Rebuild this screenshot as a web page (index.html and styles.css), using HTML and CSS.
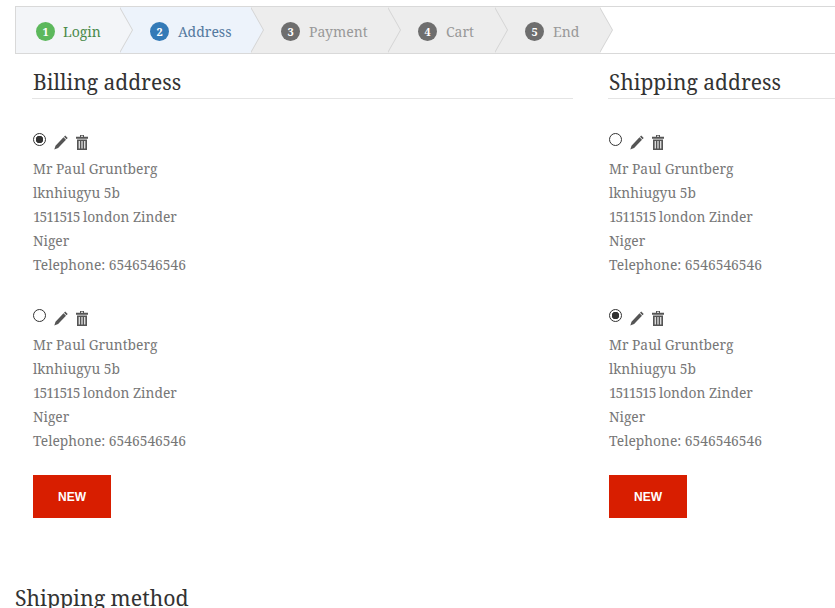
FILE: index.html
```html
<!DOCTYPE html>
<html lang="en">
<head>
<meta charset="utf-8">
<title>Checkout</title>
<link rel="stylesheet" href="styles.css">
</head>
<body>
<svg class="defs" width="0" height="0" aria-hidden="true">
  <symbol id="pencil" viewBox="0 0 14 15"><path d="M11.200 0.500l2.500 2.500-1.200 1.200-2.500-2.500zM9.500 2.200l2.500 2.500-7.900 8.400-3.800 1.500 1.200-3.900z"/></symbol>
  <symbol id="trash" viewBox="0 0 12 15"><path d="M4 0h4v1.700h4v2h-12v-2h4zM5 0.800v0.900h2v-0.900zM1 4.500h10v10.500h-10zM2.700 6v7.500h1.100v-7.500zM5.450 6v7.500h1.100v-7.500zM8.200 6v7.500h1.100v-7.500z" fill-rule="evenodd"/></symbol>
</svg>
<nav class="steps">
  <div class="step done"><span class="num">1</span>Login</div>
  <div class="step current"><span class="num">2</span>Address</div>
  <div class="step"><span class="num">3</span>Payment</div>
  <div class="step"><span class="num">4</span>Cart</div>
  <div class="step"><span class="num">5</span>End</div>
</nav>
<main class="addresses">
  <section class="column">
    <h2 class="column-title">Billing address</h2>
    <div class="card">
      <div class="controls"><input class="radio" type="radio" name="billing" checked><svg class="icon pencil"><use href="#pencil"/></svg><svg class="icon trash"><use href="#trash"/></svg></div>
      <p class="lines">Mr Paul Gruntberg<br>lknhiugyu 5b<br><span class="zip">1511515</span> london Zinder<br>Niger<br>Telephone: 6546546546</p>
    </div>
    <div class="card">
      <div class="controls"><input class="radio" type="radio" name="billing"><svg class="icon pencil"><use href="#pencil"/></svg><svg class="icon trash"><use href="#trash"/></svg></div>
      <p class="lines">Mr Paul Gruntberg<br>lknhiugyu 5b<br><span class="zip">1511515</span> london Zinder<br>Niger<br>Telephone: 6546546546</p>
    </div>
    <button class="new-btn" type="button">NEW</button>
  </section>
  <section class="column">
    <h2 class="column-title">Shipping address</h2>
    <div class="card">
      <div class="controls"><input class="radio" type="radio" name="shipping"><svg class="icon pencil"><use href="#pencil"/></svg><svg class="icon trash"><use href="#trash"/></svg></div>
      <p class="lines">Mr Paul Gruntberg<br>lknhiugyu 5b<br><span class="zip">1511515</span> london Zinder<br>Niger<br>Telephone: 6546546546</p>
    </div>
    <div class="card">
      <div class="controls"><input class="radio" type="radio" name="shipping" checked><svg class="icon pencil"><use href="#pencil"/></svg><svg class="icon trash"><use href="#trash"/></svg></div>
      <p class="lines">Mr Paul Gruntberg<br>lknhiugyu 5b<br><span class="zip">1511515</span> london Zinder<br>Niger<br>Telephone: 6546546546</p>
    </div>
    <button class="new-btn" type="button">NEW</button>
  </section>
</main>
<h2 class="method-title">Shipping method</h2>
</body>
</html>
```
FILE: styles.css
```css
html, body { margin: 0; padding: 0; height: 608px; overflow: hidden; background: #fff; }
body { font-family: "Noto Serif", "DejaVu Serif Condensed", "DejaVu Serif", serif; color: #777; padding-top: 6px; box-sizing: border-box; }
.defs { position: absolute; }

.steps { display: flex; margin-left: 15px; height: 46px; border: 1px solid #d9d9d9; border-right: 0; }
.step { position: relative; display: flex; align-items: center; box-sizing: border-box; height: 46px; background: #ededed; color: #999; font-size: 14px; padding: 2px 0 0 30px; }
.step:nth-child(1) { width: 104px; padding-left: 20px; z-index: 5; }
.step:nth-child(2) { width: 131px; z-index: 4; }
.step:nth-child(3) { width: 137px; z-index: 3; }
.step:nth-child(4) { width: 107px; z-index: 2; }
.step:nth-child(5) { width: 105px; z-index: 1; }
.step::before, .step::after { content: ""; position: absolute; top: 0; height: 46px; width: 13px; clip-path: polygon(0 0, 100% 50%, 0 100%); }
.step::before { left: 100%; background: #d4d4d4; }
.step::after { left: calc(100% - 1px); background: #ededed; }
.step.done { background: #f3f5f8; color: #4a8a4a; }
.step.done::after { background: #f3f5f8; }
.step.current { background: #edf3fb; color: #54799f; }
.step.current::after { background: #edf3fb; }
.num { display: flex; align-items: center; justify-content: center; width: 19px; height: 19px; border-radius: 50%; background: #6e6e6e; color: #fff; font-size: 11px; font-weight: 700; margin-right: 9px; }
.done .num { background: #5cb85c; margin-right: 8px; }
.current .num { background: #337ab7; }

.addresses { display: grid; grid-template-columns: 541px 541px; column-gap: 35px; margin-left: 32px; }
.column-title { margin: 0; padding: 13px 0 0 1px; height: 31px; font-size: 21px; line-height: 30px; font-weight: 400; color: #333; border-bottom: 1px solid #e4e4e4; box-sizing: content-box; }
.card { padding-left: 1px; }
.card:first-of-type { margin-top: 34px; }
.controls { display: flex; align-items: flex-start; height: 24px; }
.radio { appearance: none; width: 13px; height: 13px; margin: 0; border: 1px solid #333; border-radius: 50%; background: #fff; box-sizing: border-box; }
.radio:checked { background: radial-gradient(circle, #333 0 3.500px, #fff 4px); }
.icon { display: block; fill: #555; }
.pencil { width: 14px; height: 15px; margin: 2px 0 0 8px; }
.trash { width: 12px; height: 15px; margin: 2px 0 0 8px; }
.lines { margin: 0 0 32px; font-size: 13.800px; line-height: 24px; }
.zip { letter-spacing: -1.100px; }
.card:last-of-type .lines { margin-bottom: 22px; }
.new-btn { display: block; margin: 0 0 0 1px; width: 78px; height: 43px; border: 0; padding: 0; background: #d81e00; color: #fff; font-family: "Liberation Sans", Arial, sans-serif; font-size: 12px; font-weight: 700; }
.method-title { position: absolute; left: 15px; top: 583px; margin: 0; font-size: 21.300px; line-height: 30px; font-weight: 400; color: #333; }
```
